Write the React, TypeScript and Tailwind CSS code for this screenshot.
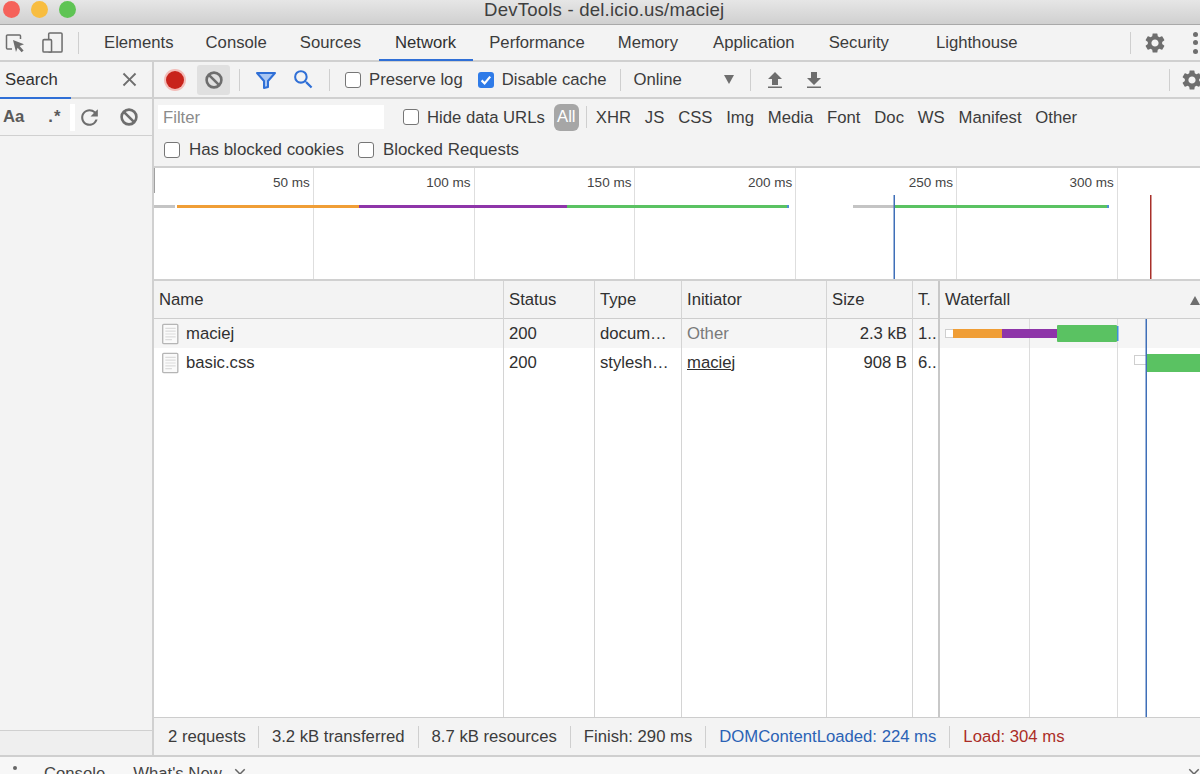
import { MdSettings, MdSearch, MdRefresh, MdClose } from 'react-icons/md'

function BlockIcon({ className }: { className?: string }) {
  return (
    <svg viewBox="0 0 20 20" className={className} fill="none" stroke="currentColor" strokeWidth="2.6">
      <circle cx="10" cy="10" r="7.4" />
      <path d="M4.8 4.8l10.4 10.4" />
    </svg>
  )
}

function Divider({ className }: { className?: string }) {
  return <div className={`w-px h-[22px] bg-[#cfcfcf] shrink-0 ${className ?? ''}`} />
}

function Check({ checked, className }: { checked?: boolean; className?: string }) {
  if (checked) {
    return (
      <span className={`w-4 h-4 rounded-[3px] bg-[#2f7be8] flex items-center justify-center shrink-0 ${className ?? ''}`}>
        <svg viewBox="0 0 16 16" className="w-4 h-4" fill="none" stroke="white" strokeWidth="2.2">
          <path d="M3.6 8.4l3 3 5.6-6.8" />
        </svg>
      </span>
    )
  }
  return <span className={`w-4 h-4 rounded-[3px] bg-white border border-[#767676] shrink-0 ${className ?? ''}`} />
}

function ArrowIcon({ down }: { down?: boolean }) {
  return (
    <svg viewBox="0 0 16 18" className="w-4 h-[18px] text-[#6e6e6e]" fill="currentColor">
      {down ? <path d="M5 1h6v6h4l-7 7-7-7h4z" /> : <path d="M8 1l7 7h-4v6H5V8H1z" />}
      <rect x="1" y="15.5" width="14" height="1.5" />
    </svg>
  )
}

function DocIcon() {
  return (
    <svg viewBox="0 0 18 22" className="w-[17px] h-[22px] shrink-0">
      <rect x="0.75" y="0.75" width="16" height="20.5" rx="1" fill="#fafafa" stroke="#b5b5b5" strokeWidth="1.4" />
      <path d="M3.5 5h11M3.5 8h11M3.5 11h11M3.5 14h11M3.5 17h7" stroke="#dcdcdc" strokeWidth="1.2" />
    </svg>
  )
}

const leftTabs = [
  { label: 'Elements', cls: 'ml-[25px]' },
  { label: 'Console', cls: 'ml-[32px]' },
  { label: 'Sources', cls: 'ml-[33px]' },
]

const rightTabs = [
  { label: 'Performance', cls: 'ml-[16px]' },
  { label: 'Memory', cls: 'ml-[33px]' },
  { label: 'Application', cls: 'ml-[35px]' },
  { label: 'Security', cls: 'ml-[34px]' },
  { label: 'Lighthouse', cls: 'ml-[47px]' },
]

const filters = ['JS', 'CSS', 'Img', 'Media', 'Font', 'Doc', 'WS', 'Manifest', 'Other']

const ticks = ['50 ms', '100 ms', '150 ms', '200 ms', '250 ms', '300 ms']

const columns = [
  { title: 'Status', width: 'w-[91px]', rows: ['200', '200'] },
  { title: 'Type', width: 'w-[87px]', rows: ['docum…', 'stylesh…'] },
]

function HeaderCell({ children }: { children: React.ReactNode }) {
  return (
    <div className="h-[38px] shrink-0 bg-[#f3f3f3] border-b border-[#cdcdcd] flex items-center px-[5px] pt-[1px] text-[#303030] whitespace-nowrap overflow-hidden">
      {children}
    </div>
  )
}

function Cell({ first, children, right }: { first?: boolean; children: React.ReactNode; right?: boolean }) {
  return (
    <div
      className={`h-[29px] shrink-0 flex items-center px-[5px] pt-[1px] whitespace-nowrap overflow-hidden text-[#303030] ${first ? 'bg-[#f5f5f5]' : 'bg-white'} ${right ? 'justify-end' : ''}`}
    >
      {children}
    </div>
  )
}

export default function App() {
  return (
    <div className="w-[1200px] h-[774px] overflow-hidden flex flex-col bg-[#f3f3f3] text-[16.7px] leading-none text-[#3c3c3c] whitespace-nowrap font-['Liberation_Sans',Arial,sans-serif]">
      {/* window title */}
      <div className="h-[25px] shrink-0 flex items-center relative bg-gradient-to-b from-[#e6e6e6] to-[#d0d0d0] border-b border-[#a9a9a9]">
        <div className="flex items-center gap-[11px] pl-[3px] -mt-[5px]">
          <span className="w-[17px] h-[17px] rounded-full bg-[#f5625b]" />
          <span className="w-[17px] h-[17px] rounded-full bg-[#f8bd40]" />
          <span className="w-[17px] h-[17px] rounded-full bg-[#5fc454]" />
        </div>
        <span className="absolute left-[484px] top-0 text-[18.6px] leading-[20px] text-[#3f3f3f] tracking-[0.2px]">
          DevTools - del.icio.us/maciej
        </span>
      </div>

      {/* panel tabs */}
      <div className="h-[37px] shrink-0 flex items-center border-b-2 border-[#d0d0d0] relative">
        <svg viewBox="0 0 20 20" className="w-5 h-5 ml-[5px] text-[#6e6e6e]" fill="none" stroke="currentColor" strokeWidth="1.5">
          <path d="M7 16H2.5a1 1 0 0 1-1-1V3a1 1 0 0 1 1-1h12a1 1 0 0 1 1 1v3" />
          <path d="M8 7l11 4.2-4.4 1.8 4 4.4-2 1.8-4-4.4L11 19z" fill="currentColor" stroke="none" />
        </svg>
        <svg viewBox="0 0 22 22" className="w-[21px] h-[21px] ml-[17px] text-[#6e6e6e]" fill="none" stroke="currentColor" strokeWidth="1.6">
          <rect x="7" y="1" width="14" height="20" rx="1.2" />
          <rect x="1" y="8" width="9" height="13" rx="1.2" fill="#f3f3f3" />
        </svg>
        <Divider className="ml-[15px]" />
        {leftTabs.map((t) => (
          <span key={t.label} className={`${t.cls} pt-[2px]`}>{t.label}</span>
        ))}
        <span className="ml-[18px] pl-[16px] pr-[17px] h-[35px] pt-[2px] flex items-center border-b-2 border-[#2f6fd6] -mb-[2px] text-[#303030]">Network</span>
        {rightTabs.map((t) => (
          <span key={t.label} className={`${t.cls} pt-[2px]`}>{t.label}</span>
        ))}
        <Divider className="ml-[112px]" />
        <MdSettings className="w-[24px] h-[24px] ml-[12px] text-[#6e6e6e] shrink-0" />
        <span className="ml-[26px] flex flex-col gap-[3.5px] shrink-0">
          <i className="w-[5px] h-[5px] rounded-full bg-[#6e6e6e]" />
          <i className="w-[5px] h-[5px] rounded-full bg-[#6e6e6e]" />
          <i className="w-[5px] h-[5px] rounded-full bg-[#6e6e6e]" />
        </span>
      </div>

      <div className="flex-1 min-h-0 flex">
        {/* search sidebar */}
        <div className="w-[154px] shrink-0 flex flex-col border-r-2 border-[#d0d0d0]">
          <div className="h-[37px] shrink-0 flex items-center border-b-2 border-[#d0d0d0] relative">
            <span className="ml-[5px] pt-[2px] text-[#303030]">Search</span>
            <MdClose className="w-[23px] h-[23px] ml-[60px] text-[#6e6e6e]" />
            <span className="absolute left-0 -bottom-[2px] w-[71px] h-[2px] bg-[#2f6fd6]" />
          </div>
          <div className="h-[37px] shrink-0 flex items-center border-b border-[#d0d0d0]">
            <span className="ml-[3px] font-bold text-[#5a5a5a]">Aa</span>
            <span className="ml-[24px] font-bold text-[#5a5a5a] tracking-[1px]">.*</span>
            <span className="ml-[9px] w-[5px] h-[27px] bg-white" />
            <MdRefresh className="w-[25px] h-[25px] ml-[2px] text-[#6e6e6e]" />
            <BlockIcon className="w-5 h-5 ml-[17px] text-[#6e6e6e]" />
          </div>
          <div className="flex-1 bg-[#f3f3f3] border-b border-[#d0d0d0]" />
          <div className="h-[24px] shrink-0 bg-[#efefef]" />
        </div>

        {/* network panel */}
        <div className="flex-1 min-w-0 flex flex-col">
          <div className="h-[37px] shrink-0 flex items-center border-b-2 border-[#d0d0d0]">
            <span className="ml-[12px] w-[18px] h-[18px] rounded-full bg-[#c8231b] ring-2 ring-[#f3bcb8] shrink-0" />
            <span className="ml-[13px] w-[33px] h-[30px] rounded-[3px] bg-[#e0e0e0] flex items-center justify-center shrink-0">
              <BlockIcon className="w-5 h-5 text-[#6e6e6e]" />
            </span>
            <Divider className="ml-[9px]" />
            <svg viewBox="0 0 22 20" className="w-[22px] h-5 ml-[15px] shrink-0">
              <path d="M2 3h18l-7 8v6l-4 1v-7z" fill="#a9c6f2" stroke="#2f6fd6" strokeWidth="2" strokeLinejoin="round" />
            </svg>
            <MdSearch className="w-[25px] h-[25px] ml-[14px] text-[#2f6fd6] shrink-0" />
            <Divider className="ml-[13px]" />
            <Check className="ml-[15px]" />
            <span className="ml-[8px] pt-[2px]">Preserve log</span>
            <Check checked className="ml-[15px]" />
            <span className="ml-[8px] pt-[2px]">Disable cache</span>
            <Divider className="ml-[13px]" />
            <span className="ml-[13px] pt-[2px]">Online</span>
            <span className="ml-[42px] w-0 h-0 border-x-[5px] border-x-transparent border-t-[9px] border-t-[#6e6e6e]" />
            <Divider className="ml-[16px]" />
            <span className="ml-[16px] flex"><ArrowIcon /></span>
            <span className="ml-[23px] flex"><ArrowIcon down /></span>
            <Divider className="ml-[347px]" />
            <MdSettings className="w-[24px] h-[24px] ml-[10px] text-[#6e6e6e] shrink-0" />
          </div>

          {/* filter bar */}
          <div className="h-[69px] shrink-0 flex flex-col border-b-2 border-[#d0d0d0]">
            <div className="h-[36px] flex items-center">
              <span className="ml-[4px] w-[226px] h-[24px] bg-white flex items-center pl-[5px] pt-[2px] text-[#8b8b8b]">Filter</span>
              <Check className="ml-[19px]" />
              <span className="ml-[8px] pt-[2px]">Hide data URLs</span>
              <span className="ml-[9px] w-[25px] h-[27px] rounded-[6px] bg-[#a6a6a6] text-white flex items-center justify-center">All</span>
              <Divider className="ml-[7px]" />
              <span className="ml-[9px] pt-[2px]">XHR</span>
              {filters.map((f) => (
                <span key={f} className="ml-[13.8px] pt-[2px]">{f}</span>
              ))}
            </div>
            <div className="h-[29px] flex items-center text-[16.9px]">
              <Check className="ml-[10px]" />
              <span className="ml-[9px] pt-[2px]">Has blocked cookies</span>
              <Check className="ml-[14px]" />
              <span className="ml-[9px] pt-[2px]">Blocked Requests</span>
            </div>
          </div>

          {/* overview */}
          <div className="h-[113px] shrink-0 bg-white border-b-2 border-[#d0d0d0] flex relative overflow-hidden">
            {ticks.map((t) => (
              <div key={t} className="w-[160.8px] first:w-[159.8px] shrink-0 border-r border-[#dedede] text-right pr-[3px] pt-[7px] text-[13.5px] leading-[15px] text-[#444]">
                {t}
              </div>
            ))}
            <span className="absolute -left-[1px] top-0 w-[2px] h-[25px] bg-[#a0a0a0]" />
            <svg className="absolute -left-[1px] top-0 w-[1047px] h-[113px]" viewBox="0 0 1047 113">
              <rect x="0" y="37" width="22" height="3" fill="#c4c4c4" />
              <rect x="24" y="37" width="182" height="3" fill="#f09e36" />
              <rect x="206" y="37" width="208" height="3" fill="#8e35a9" />
              <rect x="414" y="37" width="220" height="3" fill="#5ac262" />
              <rect x="634" y="37" width="2" height="3" fill="#4a90d9" />
              <rect x="700" y="37" width="41" height="3" fill="#c4c4c4" />
              <rect x="742" y="37" width="212" height="3" fill="#5ac262" />
              <rect x="954" y="37" width="2" height="3" fill="#4a90d9" />
              <rect x="740.5" y="27" width="1.5" height="86" fill="#3f6fb8" />
              <rect x="997" y="27" width="1.5" height="86" fill="#a8302a" />
            </svg>
          </div>

          {/* requests table */}
          <div className="flex-1 min-h-0 flex bg-white border-b border-[#cdcdcd]">
            <div className="w-[350px] shrink-0 border-r border-[#d4d4d4] flex flex-col">
              <HeaderCell>Name</HeaderCell>
              <Cell first>
                <span className="ml-[3px] flex"><DocIcon /></span>
                <span className="ml-[7px]">maciej</span>
              </Cell>
              <Cell>
                <span className="ml-[3px] flex"><DocIcon /></span>
                <span className="ml-[7px]">basic.css</span>
              </Cell>
            </div>
            {columns.map((c) => (
              <div key={c.title} className={`${c.width} shrink-0 border-r border-[#d4d4d4] flex flex-col`}>
                <HeaderCell>{c.title}</HeaderCell>
                <Cell first>{c.rows[0]}</Cell>
                <Cell>{c.rows[1]}</Cell>
              </div>
            ))}
            <div className="w-[145px] shrink-0 border-r border-[#d4d4d4] flex flex-col">
              <HeaderCell>Initiator</HeaderCell>
              <Cell first><span className="text-[#7a7a7a]">Other</span></Cell>
              <Cell><span className="underline">maciej</span></Cell>
            </div>
            <div className="w-[86px] shrink-0 border-r border-[#d4d4d4] flex flex-col">
              <HeaderCell>Size</HeaderCell>
              <Cell first right>2.3 kB</Cell>
              <Cell right>908 B</Cell>
            </div>
            <div className="w-[27px] shrink-0 border-r-2 border-[#c8c8c8] flex flex-col">
              <HeaderCell>T.</HeaderCell>
              <Cell first>1..</Cell>
              <Cell>6..</Cell>
            </div>
            <div className="flex-1 min-w-0 flex flex-col">
              <div className="h-[38px] shrink-0 bg-[#f3f3f3] border-b border-[#cdcdcd] flex items-center justify-between pl-[5px] pt-[1px] text-[#303030]">
                Waterfall
                <span className="w-0 h-0 border-x-[5px] border-x-transparent border-b-[9px] border-b-[#6e6e6e]" />
              </div>
              <div className="flex-1 relative">
                <div className="absolute left-0 right-0 top-0 h-[29px] bg-[#f5f5f5]" />
                <svg className="absolute left-0 top-0 w-[260px] h-full" preserveAspectRatio="none">
                  <rect x="89" y="0" width="1" height="100%" fill="#dcdcdc" />
                  <rect x="177" y="0" width="1" height="100%" fill="#dcdcdc" />
                  <rect x="5.5" y="10.5" width="8" height="8" fill="white" stroke="#cfcfcf" />
                  <rect x="13" y="10" width="49" height="9" fill="#f09e36" />
                  <rect x="62" y="10" width="55" height="9" fill="#8e35a9" />
                  <rect x="117" y="6" width="60" height="17" rx="1" fill="#5ac262" />
                  <rect x="177" y="7" width="1.5" height="15" fill="#3f8fd9" />
                  <rect x="194.5" y="36.5" width="12" height="9" fill="white" stroke="#cfcfcf" />
                  <rect x="206" y="35" width="55" height="18" fill="#5ac262" />
                  <rect x="205.5" y="0" width="1.5" height="100%" fill="#3f6fb8" />
                </svg>
              </div>
            </div>
          </div>

          {/* status bar */}
          <div className="h-[37px] shrink-0 flex items-center pt-[1px] text-[#3c3c3c]">
            <span className="ml-[14px]">2 requests</span>
            <Divider className="ml-[12px]" />
            <span className="ml-[13px]">3.2 kB transferred</span>
            <Divider className="ml-[13px]" />
            <span className="ml-[13px]">8.7 kB resources</span>
            <Divider className="ml-[13px]" />
            <span className="ml-[13px]">Finish: 290 ms</span>
            <Divider className="ml-[13px]" />
            <span className="ml-[13px] text-[#2b62b5]">DOMContentLoaded: 224 ms</span>
            <Divider className="ml-[13px]" />
            <span className="ml-[13px] text-[#ab2d27]">Load: 304 ms</span>
          </div>
        </div>
      </div>

      {/* drawer tabs, cut off by the window */}
      <div className="h-[19px] shrink-0 bg-[#f7f7f7] border-t-2 border-[#cfcfcf] flex relative overflow-hidden text-[#444]">
        <span className="absolute left-[13px] top-[9px] w-[4px] h-[4px] rounded-full bg-[#666]" />
        <span className="ml-[44px] mt-[9px]">Console</span>
        <span className="ml-[28px] mt-[9px]">What's New</span>
        <MdClose className="w-[18px] h-[18px] ml-[9px] mt-[8px] text-[#666] shrink-0" />
        <MdClose className="absolute right-[-3px] top-[8px] w-[18px] h-[18px] text-[#666]" />
      </div>
    </div>
  )
}
